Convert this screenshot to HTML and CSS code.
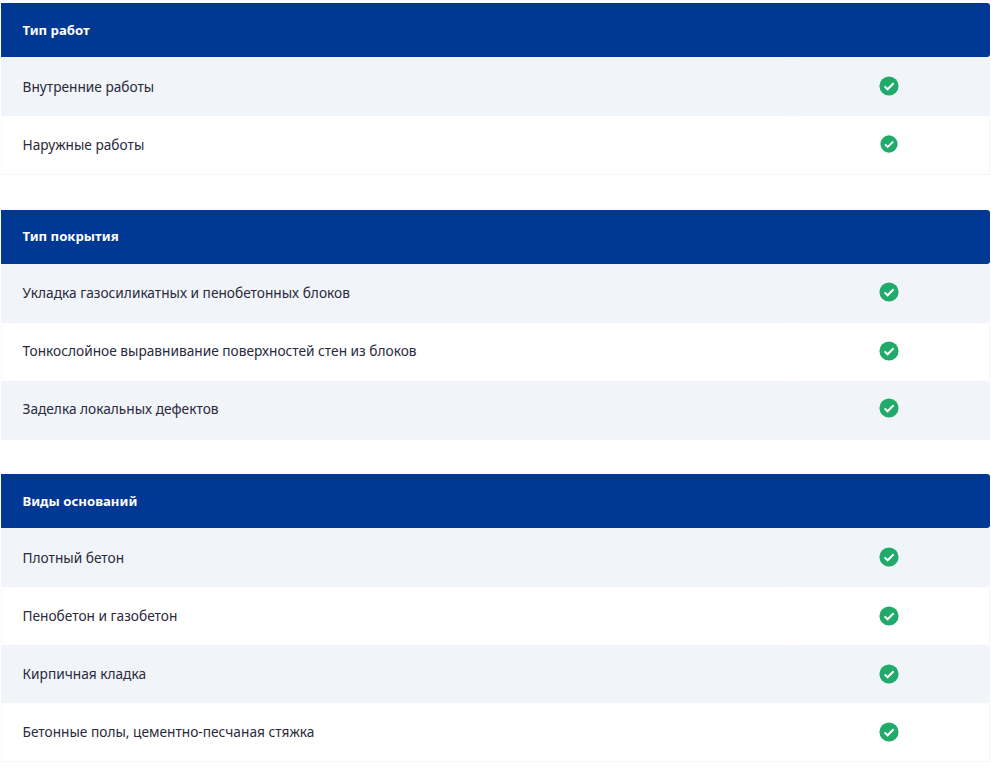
FILE: index.html
```html
<!DOCTYPE html>
<html lang="ru">
<head>
<meta charset="utf-8">
<title>Характеристики</title>
<link rel="stylesheet" href="styles.css">
</head>
<body>
<svg class="defs" width="0" height="0" aria-hidden="true"><symbol id="ok" viewBox="0 0 20 20"><circle cx="10" cy="10" r="9.6" fill="#22aa6b"/><path d="M5.6 10.4 8.6 13.3 14.6 7.3" fill="none" stroke="#fff" stroke-width="2"/></symbol></svg>
<main class="page">
<section class="group">
  <h2 class="head">Тип работ</h2>
  <div class="row tall"><div class="name">Внутренние работы</div><div class="val"><svg class="ic"><use href="#ok"/></svg></div></div>
  <div class="row"><div class="name">Наружные работы</div><div class="val"><svg class="ic small"><use href="#ok"/></svg></div></div>
</section>
<section class="group raised">
  <h2 class="head">Тип покрытия</h2>
  <div class="row tall"><div class="name">Укладка газосиликатных и пенобетонных блоков</div><div class="val"><svg class="ic"><use href="#ok"/></svg></div></div>
  <div class="row"><div class="name">Тонкослойное выравнивание поверхностей стен из блоков</div><div class="val"><svg class="ic"><use href="#ok"/></svg></div></div>
  <div class="row tall"><div class="name">Заделка локальных дефектов</div><div class="val"><svg class="ic"><use href="#ok"/></svg></div></div>
</section>
<section class="group">
  <h2 class="head">Виды оснований</h2>
  <div class="row tall"><div class="name">Плотный бетон</div><div class="val"><svg class="ic"><use href="#ok"/></svg></div></div>
  <div class="row"><div class="name">Пенобетон и газобетон</div><div class="val"><svg class="ic"><use href="#ok"/></svg></div></div>
  <div class="row"><div class="name">Кирпичная кладка</div><div class="val"><svg class="ic"><use href="#ok"/></svg></div></div>
  <div class="row"><div class="name">Бетонные полы, цементно-песчаная стяжка</div><div class="val"><svg class="ic"><use href="#ok"/></svg></div></div>
</section>
</main>
</body>
</html>
```
FILE: styles.css
```css
html, body { margin: 0; padding: 0; background: #fff; }
body { font-family: "Noto Sans", "Open Sans", sans-serif; color: #2a2a3c; font-size: 13.7px; }
.defs { position: absolute; }
.page { padding: 3px 1px 0; width: 989px; }
.group { display: flex; flex-direction: column; margin-bottom: 34px; }
.group:first-child { margin-bottom: 35px; }
.head { margin: 0; height: 54px; display: flex; align-items: center; padding-left: 21.5px; padding-bottom: 1px; box-sizing: border-box; background: #003893; color: #fff; font-size: 13.2px; font-weight: 700; border-radius: 0 3px 3px 0; }
.row { display: grid; grid-template-columns: 790px 199px; height: 58px; box-sizing: border-box; }
.tall { height: 59px; }
.name { display: flex; align-items: center; padding-left: 21.5px; padding-bottom: 1px; box-sizing: border-box; }
.val { display: flex; align-items: center; justify-content: center; padding: 0 3px 1px 0; box-sizing: border-box; border-radius: 3px; }
.row:nth-of-type(odd) .name, .row:nth-of-type(odd) .val { background: #f1f4f9; }
.row:nth-of-type(even):last-child { height: 59px; border-bottom: 1px solid #f3f5fa; }
.row:nth-of-type(even) .name { border-left: 1px solid #fafbfd; padding-left: 20.5px; }
.row:nth-of-type(even) .val { border-right: 1px solid #f3f5fa; padding-right: 2px; }
.raised .head { padding-bottom: 3px; }
.raised .row .name, .raised .row .val { padding-bottom: 3px; }
.raised .row:last-child .name, .raised .row:last-child .val { padding-bottom: 5px; }
.ic { width: 20px; height: 20px; display: block; }
.small { width: 18px; height: 18px; margin-bottom: 2px; }
```
